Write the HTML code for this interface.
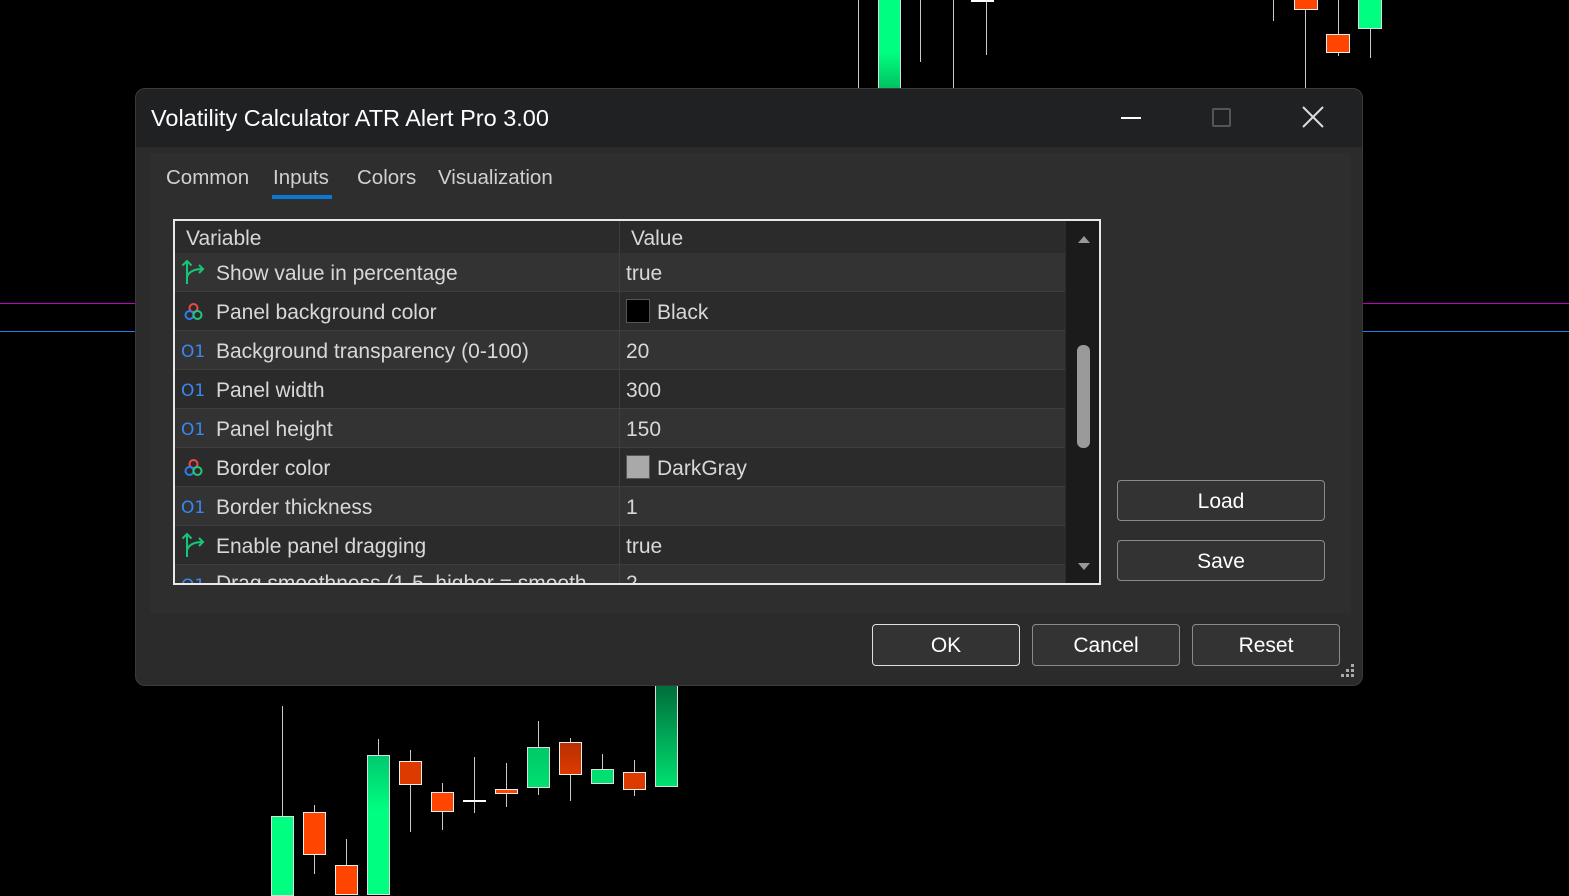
<!DOCTYPE html>
<html><head><meta charset="utf-8"><style>
*{margin:0;padding:0;box-sizing:border-box}
body{width:1569px;height:893px;background:#000;position:relative;overflow:hidden;font-family:"Liberation Sans","DejaVu Sans",sans-serif;color:#d8d8d8}
.a{position:absolute}
.w{position:absolute;width:1px;background:#c8c8c8}
.g{position:absolute;background:#00ff80;border:1px solid #ddd}
.r{position:absolute;background:#ff4500;border:1px solid #eee}
.row{position:absolute;left:175px;width:890px;height:39px;border-bottom:1px solid #3e3e3e;font-size:21px}
.row .t{position:absolute;left:41px;top:9px}
.row .v{position:absolute;left:451px;top:9px}
.row .ic{position:absolute;left:6px;top:9px}
.btn{position:absolute;border:1px solid #8a8a8a;border-radius:4px;background:#333;color:#fff;font-size:21px;text-align:center}
</style></head><body>
<div class="a" style="left:0;top:303px;width:1569px;height:1px;background:#c000c0"></div>
<div class="a" style="left:0;top:331px;width:1569px;height:1px;background:#2080e0"></div>
<div class="w" style="left:858px;top:0;height:88px"></div>
<div class="g" style="left:878px;top:-2px;width:23px;height:92px;background:linear-gradient(#00ff80 60%,#00c060)"></div>
<div class="w" style="left:920px;top:0;height:62px"></div>
<div class="w" style="left:953px;top:0;height:88px"></div>
<div class="w" style="left:986px;top:0;height:55px"></div>
<div class="a" style="left:971px;top:0;width:23px;height:2px;background:#fff"></div>
<div class="w" style="left:1273px;top:0;height:21px"></div>
<div class="w" style="left:1305px;top:0;height:88px"></div>
<div class="r" style="left:1294px;top:-2px;width:24px;height:12px"></div>
<div class="w" style="left:1338px;top:0;height:56px"></div>
<div class="r" style="left:1326px;top:34px;width:24px;height:19px"></div>
<div class="w" style="left:1370px;top:0;height:58px"></div>
<div class="g" style="left:1358px;top:-2px;width:24px;height:31px"></div>
<div class="w" style="left:282px;top:706px;height:110px"></div>
<div class="g" style="left:271px;top:816px;width:23px;height:80px"></div>
<div class="w" style="left:314px;top:805px;height:69px"></div>
<div class="r" style="left:303px;top:812px;width:23px;height:43px"></div>
<div class="w" style="left:346px;top:839px;height:30px"></div>
<div class="r" style="left:335px;top:865px;width:23px;height:30px"></div>
<div class="w" style="left:378px;top:739px;height:20px"></div>
<div class="g" style="left:367px;top:755px;width:23px;height:140px;background:linear-gradient(#00c870,#00ff80 40%)"></div>
<div class="w" style="left:410px;top:750px;height:82px"></div>
<div class="r" style="left:399px;top:761px;width:23px;height:24px;background:#dd3a00"></div>
<div class="w" style="left:442px;top:783px;height:47px"></div>
<div class="r" style="left:431px;top:792px;width:23px;height:20px"></div>
<div class="w" style="left:474px;top:757px;height:56px"></div>
<div class="a" style="left:463px;top:800px;width:23px;height:2px;background:#fff"></div>
<div class="w" style="left:506px;top:763px;height:44px"></div>
<div class="r" style="left:495px;top:789px;width:23px;height:5px"></div>
<div class="w" style="left:538px;top:721px;height:74px"></div>
<div class="g" style="left:527px;top:747px;width:23px;height:41px;background:linear-gradient(#00c868,#00e070)"></div>
<div class="w" style="left:570px;top:738px;height:63px"></div>
<div class="r" style="left:559px;top:742px;width:23px;height:33px;background:linear-gradient(#b83000,#dd3a00)"></div>
<div class="w" style="left:602px;top:754px;height:16px"></div>
<div class="g" style="left:591px;top:769px;width:23px;height:15px;background:#00e070"></div>
<div class="w" style="left:634px;top:760px;height:36px"></div>
<div class="r" style="left:623px;top:772px;width:23px;height:18px;background:#dd3a00"></div>
<div class="g" style="left:655px;top:680px;width:23px;height:107px;background:linear-gradient(#006838,#00e070)"></div>

<div class="a" style="left:135px;top:88px;width:1228px;height:598px;background:#2b2b2b;border-radius:10px;border:1px solid #3a3a3a;overflow:hidden">
  <div class="a" style="left:0;top:0;width:1228px;height:58px;background:#1f2123"></div>
  <div class="a" style="left:15px;top:16px;font-size:23.5px;color:#fff">Volatility Calculator ATR Alert Pro 3.00</div>
  <div class="a" style="left:985px;top:28px;width:20px;height:2px;background:#fff"></div>
  <div class="a" style="left:1076px;top:19px;width:19px;height:19px;border:2px solid #555;border-radius:2px"></div>
  <svg class="a" style="left:1165px;top:16px" width="24" height="24"><path d="M2 2L22 22M22 2L2 22" stroke="#ddd" stroke-width="2"/></svg>
  <div class="a" style="left:14px;top:64px;width:1201px;height:460px;background:#2e2e2e"></div>
  <div class="a" style="left:30px;top:77px;font-size:20.5px;color:#d0d0d0">Common</div>
  <div class="a" style="left:137px;top:77px;font-size:20.5px;color:#d0d0d0">Inputs</div>
  <div class="a" style="left:136px;top:106px;width:60px;height:4px;background:#0a78d4"></div>
  <div class="a" style="left:221px;top:77px;font-size:20.5px;color:#d0d0d0">Colors</div>
  <div class="a" style="left:302px;top:77px;font-size:20.5px;color:#d0d0d0">Visualization</div>
</div>
<div class="a" style="left:173px;top:219px;width:928px;height:366px;border:2px solid #e8e8e8;background:#2b2b2b;overflow:hidden">
  <div class="a" style="left:0;top:0;width:890px;height:33px;background:#2b2b2b;border-bottom:1px solid #3e3e3e;font-size:21px"><span class="a" style="left:11px;top:6px">Variable</span><span class="a" style="left:456px;top:6px">Value</span></div>
  <div class="a" style="left:891px;top:0;width:33px;height:366px;background:#1b1b1b"></div>
  <div class="a" style="left:903px;top:15px;width:0;height:0;border-left:6px solid transparent;border-right:6px solid transparent;border-bottom:7px solid #999"></div>
  <div class="a" style="left:903px;top:342px;width:0;height:0;border-left:6px solid transparent;border-right:6px solid transparent;border-top:7px solid #999"></div>
  <div class="a" style="left:902px;top:124px;width:13px;height:103px;background:#9a9a9a;border-radius:6px"></div>
  <div class="a" style="left:444px;top:0;width:1px;height:366px;background:#3e3e3e;z-index:2"></div>
</div>
<svg width="0" height="0" style="position:absolute"><defs>
<g id="arr"><path d="M6 26V3M1.5 7.5L6 3L10.5 7.5M6 19C8 13 14 11 22 11M18 7L22 11L18 15" stroke="#14c878" stroke-width="2" fill="none"/></g>
<g id="clr"><circle cx="9.5" cy="5" r="4" stroke="#f04848" stroke-width="2" fill="none"/><circle cx="5.5" cy="12" r="4" stroke="#2e7cf0" stroke-width="2" fill="none"/><circle cx="13.5" cy="12" r="4" stroke="#1ec878" stroke-width="2" fill="none"/></g>
<g id="num"><text x="0" y="17" font-family="DejaVu Sans,sans-serif" font-size="17" fill="#3a86f2">O1</text></g>
</defs></svg>
<div class="row" style="top:253px;background:#333"><svg class="ic" style="top:5px" width="26" height="28"><use href="#arr"/></svg><span class="t">Show value in percentage</span><span class="v">true</span></div>
<div class="row" style="top:292px;background:#2b2b2b"><svg class="ic" style="left:9px;top:11px" width="20" height="20"><use href="#clr"/></svg><span class="t">Panel background color</span><span class="a" style="left:451px;top:7px;width:24px;height:24px;background:#000;border:1px solid #555"></span><span class="v" style="left:482px">Black</span></div>
<div class="row" style="top:331px;background:#333"><svg class="ic" width="26" height="22"><use href="#num"/></svg><span class="t">Background transparency (0-100)</span><span class="v">20</span></div>
<div class="row" style="top:370px;background:#2b2b2b"><svg class="ic" width="26" height="22"><use href="#num"/></svg><span class="t">Panel width</span><span class="v">300</span></div>
<div class="row" style="top:409px;background:#333"><svg class="ic" width="26" height="22"><use href="#num"/></svg><span class="t">Panel height</span><span class="v">150</span></div>
<div class="row" style="top:448px;background:#2b2b2b"><svg class="ic" style="left:9px;top:11px" width="20" height="20"><use href="#clr"/></svg><span class="t">Border color</span><span class="a" style="left:451px;top:7px;width:24px;height:24px;background:#a9a9a9;border:1px solid #555"></span><span class="v" style="left:482px">DarkGray</span></div>
<div class="row" style="top:487px;background:#333"><svg class="ic" width="26" height="22"><use href="#num"/></svg><span class="t">Border thickness</span><span class="v">1</span></div>
<div class="row" style="top:526px;background:#2b2b2b"><svg class="ic" style="top:5px" width="26" height="28"><use href="#arr"/></svg><span class="t">Enable panel dragging</span><span class="v">true</span></div>
<div class="a" style="left:175px;top:565px;width:890px;height:18px;overflow:hidden;background:#333;font-size:21px"><svg class="a" style="left:6px;top:9px" width="26" height="22"><use href="#num"/></svg><span class="a" style="left:41px;top:7px">Drag smoothness (1-5, higher = smooth</span><span class="a" style="left:451px;top:7px">2</span></div>
<div class="a" style="left:619px;top:221px;width:1px;height:362px;background:#3e3e3e"></div>
<div class="btn" style="left:1117px;top:480px;width:208px;height:41px;line-height:41px">Load</div>
<div class="btn" style="left:1117px;top:540px;width:208px;height:41px;line-height:41px">Save</div>
<div class="btn" style="left:872px;top:624px;width:148px;height:42px;line-height:42px;border-color:#e0e0e0">OK</div>
<div class="btn" style="left:1032px;top:624px;width:148px;height:42px;line-height:42px">Cancel</div>
<div class="btn" style="left:1192px;top:624px;width:148px;height:42px;line-height:42px">Reset</div>
<svg class="a" style="left:1341px;top:664px" width="16" height="16"><g fill="#aaa"><rect x="10" y="0" width="3" height="3"/><rect x="5" y="5" width="3" height="3"/><rect x="10" y="5" width="3" height="3"/><rect x="0" y="10" width="3" height="3"/><rect x="5" y="10" width="3" height="3"/><rect x="10" y="10" width="3" height="3"/></g></svg>
</body></html>
